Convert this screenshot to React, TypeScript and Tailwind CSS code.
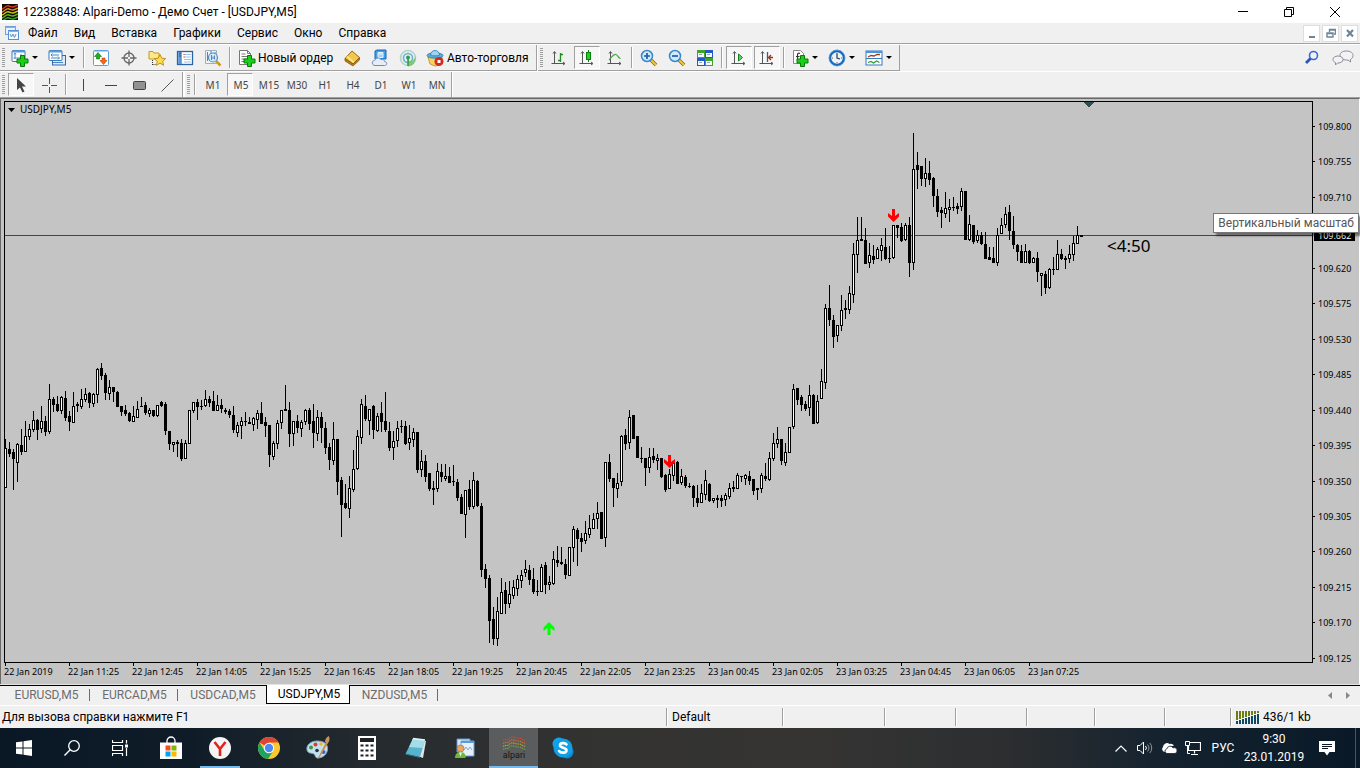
import type { ReactNode } from 'react'
import { clsx } from 'clsx'

// [high, body top, body bottom, low, rising] in chart rows, one candle every 4px
type Candle = [number, number, number, number, number]

const CANDLES: Candle[] = [
  [439, 448, 488, 488, 1], [442, 449, 454, 457, 0], [449, 452, 459, 490, 0], [443, 444, 463, 482, 1], [429, 445, 452, 455, 0],
  [421, 436, 452, 452, 1], [424, 429, 437, 440, 1], [411, 420, 430, 432, 1], [419, 420, 430, 440, 0], [406, 421, 429, 433, 1],
  [416, 421, 432, 436, 0], [384, 399, 432, 434, 1], [397, 399, 405, 412, 0], [396, 404, 411, 412, 0], [396, 397, 411, 414, 1],
  [391, 398, 418, 421, 0], [411, 416, 422, 431, 0], [392, 406, 423, 423, 1], [402, 404, 406, 412, 0], [389, 399, 407, 409, 1],
  [388, 394, 400, 402, 1], [392, 393, 403, 408, 0], [393, 394, 404, 407, 1], [368, 369, 395, 403, 1], [363, 368, 376, 380, 0],
  [373, 375, 393, 400, 0], [380, 387, 394, 400, 1], [387, 387, 392, 402, 0], [391, 392, 407, 407, 0], [406, 406, 412, 416, 0],
  [405, 410, 414, 416, 0], [412, 413, 421, 422, 0], [406, 416, 422, 422, 1], [401, 409, 418, 418, 1], [397, 406, 407, 407, 0],
  [402, 405, 413, 415, 0], [408, 410, 414, 417, 1], [410, 410, 416, 417, 0], [405, 405, 416, 417, 1], [401, 402, 406, 407, 0],
  [402, 404, 431, 435, 0], [431, 431, 444, 450, 0], [442, 442, 445, 452, 1], [440, 442, 444, 457, 0], [439, 443, 459, 461, 0],
  [440, 443, 459, 459, 1], [410, 410, 444, 444, 1], [402, 402, 411, 413, 1], [399, 402, 407, 420, 0], [400, 406, 407, 410, 0],
  [390, 399, 406, 407, 1], [396, 399, 403, 407, 0], [391, 401, 411, 411, 0], [395, 405, 411, 411, 1], [399, 405, 409, 413, 0],
  [408, 410, 412, 414, 0], [409, 411, 415, 418, 0], [406, 415, 430, 433, 0], [422, 425, 433, 437, 1], [417, 421, 426, 439, 1],
  [412, 421, 422, 426, 0], [417, 422, 424, 424, 0], [417, 418, 425, 431, 1], [410, 413, 420, 429, 1], [402, 413, 424, 424, 0],
  [417, 422, 426, 437, 0], [425, 425, 455, 467, 0], [441, 443, 457, 460, 1], [420, 423, 444, 449, 1], [410, 410, 423, 429, 1],
  [385, 409, 411, 411, 0], [402, 410, 434, 447, 0], [421, 421, 434, 446, 1], [415, 421, 428, 433, 0], [420, 422, 429, 437, 1],
  [409, 410, 422, 425, 1], [408, 410, 424, 430, 0], [404, 421, 433, 448, 0], [410, 417, 434, 441, 1], [412, 417, 428, 443, 0],
  [422, 428, 448, 454, 0], [443, 447, 460, 470, 0], [422, 439, 461, 465, 1], [439, 439, 482, 495, 0], [477, 480, 505, 537, 0],
  [484, 503, 508, 509, 0], [476, 488, 509, 518, 1], [450, 469, 490, 492, 1], [430, 436, 469, 470, 1], [399, 404, 438, 444, 1],
  [395, 406, 419, 421, 0], [409, 409, 421, 435, 1], [405, 406, 430, 439, 0], [413, 416, 431, 432, 1], [402, 413, 422, 432, 0],
  [392, 421, 430, 432, 0], [422, 431, 448, 451, 0], [431, 441, 448, 460, 1], [421, 428, 441, 447, 1], [420, 426, 427, 433, 0],
  [421, 426, 444, 445, 0], [425, 438, 443, 450, 1], [428, 432, 440, 447, 1], [432, 432, 470, 473, 0], [450, 461, 470, 477, 1],
  [455, 461, 477, 482, 0], [473, 473, 489, 491, 0], [481, 488, 490, 505, 0], [463, 471, 489, 492, 1], [464, 472, 477, 482, 0],
  [464, 476, 479, 481, 1], [467, 476, 483, 483, 0], [465, 481, 482, 486, 0], [479, 482, 498, 501, 0], [494, 497, 514, 514, 0],
  [490, 490, 515, 538, 1], [480, 489, 507, 510, 0], [472, 480, 507, 509, 1], [480, 481, 506, 507, 0], [503, 506, 570, 577, 0],
  [564, 569, 579, 588, 0], [575, 578, 621, 643, 0], [607, 619, 639, 645, 0], [597, 611, 639, 646, 1], [578, 592, 614, 614, 1],
  [582, 590, 604, 614, 0], [581, 594, 604, 608, 1], [580, 587, 596, 599, 1], [575, 579, 589, 596, 1], [570, 575, 581, 588, 1],
  [560, 569, 573, 577, 1], [565, 570, 580, 585, 0], [568, 579, 592, 594, 0], [580, 591, 592, 596, 0], [564, 567, 592, 592, 1],
  [562, 565, 585, 594, 0], [576, 582, 585, 590, 1], [551, 559, 584, 585, 1], [546, 560, 563, 567, 0], [547, 562, 564, 565, 0],
  [559, 564, 575, 579, 0], [547, 547, 576, 576, 1], [526, 529, 548, 562, 1], [528, 530, 539, 566, 0], [533, 538, 542, 552, 0],
  [521, 533, 541, 544, 1], [515, 528, 535, 538, 1], [513, 519, 529, 529, 1], [502, 513, 519, 529, 1], [512, 512, 539, 539, 0],
  [462, 462, 538, 547, 1], [454, 462, 479, 482, 0], [478, 478, 488, 507, 0], [473, 483, 489, 498, 1], [435, 436, 482, 486, 1],
  [429, 435, 444, 450, 0], [410, 417, 443, 449, 1], [415, 415, 439, 439, 0], [436, 436, 458, 458, 0], [447, 458, 459, 463, 0],
  [458, 458, 468, 486, 0], [448, 457, 468, 473, 1], [448, 456, 460, 463, 0], [454, 458, 461, 470, 1], [458, 458, 477, 478, 0],
  [474, 475, 490, 492, 0], [469, 474, 489, 489, 1], [462, 463, 476, 481, 1], [461, 462, 484, 484, 0], [469, 476, 483, 485, 1],
  [475, 477, 486, 488, 0], [483, 486, 487, 488, 0], [485, 486, 498, 507, 0], [485, 498, 503, 507, 0], [484, 493, 503, 503, 1],
  [470, 480, 495, 500, 1], [483, 484, 501, 502, 0], [498, 498, 501, 503, 1], [495, 498, 500, 508, 0], [495, 498, 501, 507, 0],
  [493, 495, 500, 506, 1], [483, 488, 497, 499, 1], [481, 487, 489, 492, 0], [473, 475, 489, 489, 1], [476, 476, 477, 482, 0],
  [474, 475, 479, 485, 1], [471, 476, 481, 485, 0], [479, 479, 491, 495, 0], [488, 488, 490, 500, 0], [473, 475, 489, 493, 1],
  [463, 476, 479, 481, 0], [452, 458, 480, 481, 1], [433, 443, 459, 461, 1], [427, 439, 444, 448, 1], [439, 439, 461, 465, 0],
  [443, 452, 463, 466, 1], [427, 427, 453, 453, 1], [384, 389, 427, 429, 1], [388, 388, 400, 405, 0], [395, 397, 405, 411, 0],
  [401, 404, 409, 411, 0], [385, 395, 408, 416, 1], [394, 395, 424, 424, 0], [395, 401, 423, 424, 1], [369, 381, 399, 399, 1],
  [304, 308, 383, 389, 1], [285, 308, 320, 326, 0], [315, 320, 337, 348, 0], [325, 325, 336, 342, 1], [295, 310, 326, 331, 1],
  [300, 308, 310, 319, 0], [286, 293, 310, 314, 1], [243, 254, 295, 303, 1], [217, 240, 255, 273, 1], [217, 239, 241, 241, 0],
  [228, 240, 264, 264, 0], [243, 255, 263, 268, 1], [245, 256, 260, 264, 0], [247, 249, 259, 259, 1], [238, 245, 251, 261, 1],
  [228, 247, 259, 260, 0], [246, 258, 259, 263, 0], [225, 225, 258, 259, 1], [225, 225, 228, 238, 0], [223, 227, 241, 242, 0],
  [223, 225, 240, 241, 1], [217, 225, 263, 277, 0], [133, 169, 263, 270, 1], [152, 165, 170, 189, 0], [166, 166, 179, 186, 0],
  [158, 173, 179, 187, 1], [161, 173, 180, 185, 0], [177, 178, 196, 207, 0], [189, 196, 212, 217, 0], [207, 210, 213, 228, 0],
  [192, 208, 214, 218, 1], [199, 207, 210, 222, 1], [197, 207, 208, 211, 0], [203, 206, 209, 214, 0], [188, 191, 207, 211, 1],
  [191, 191, 240, 240, 0], [215, 224, 240, 241, 1], [225, 225, 242, 244, 0], [230, 235, 241, 243, 1], [232, 235, 244, 245, 0],
  [232, 244, 259, 259, 0], [247, 257, 260, 260, 0], [247, 258, 263, 263, 0], [228, 235, 263, 266, 1], [218, 225, 234, 234, 1],
  [207, 214, 225, 228, 1], [205, 212, 231, 240, 0], [216, 231, 245, 249, 0], [244, 245, 252, 261, 0], [245, 251, 263, 263, 0],
  [244, 251, 263, 263, 1], [250, 251, 263, 264, 0], [257, 258, 263, 263, 1], [252, 258, 272, 282, 0], [273, 273, 276, 296, 1],
  [271, 274, 288, 294, 0], [268, 269, 288, 289, 1], [257, 269, 270, 275, 0], [240, 254, 270, 270, 1], [249, 254, 259, 260, 0],
  [256, 258, 260, 269, 0], [245, 254, 259, 263, 1], [236, 243, 255, 261, 1], [226, 235, 244, 244, 1], [235, 235, 237, 237, 0],
]

const PRICES = [
  '109.800', '109.755', '109.710', '109.665', '109.620', '109.575', '109.530', '109.485',
  '109.440', '109.395', '109.350', '109.305', '109.260', '109.215', '109.170', '109.125',
]

const TIMES = [
  '22 Jan 2019', '22 Jan 11:25', '22 Jan 12:45', '22 Jan 14:05', '22 Jan 15:25', '22 Jan 16:45',
  '22 Jan 18:05', '22 Jan 19:25', '22 Jan 20:45', '22 Jan 22:05', '22 Jan 23:25', '23 Jan 00:45',
  '23 Jan 02:05', '23 Jan 03:25', '23 Jan 04:45', '23 Jan 06:05', '23 Jan 07:25',
]

const MENU = ['Файл', 'Вид', 'Вставка', 'Графики', 'Сервис', 'Окно', 'Справка']
const PERIODS = ['M1', 'M5', 'M15', 'M30', 'H1', 'H4', 'D1', 'W1', 'MN']
const TABS = ['EURUSD,M5', 'EURCAD,M5', 'USDCAD,M5', 'USDJPY,M5', 'NZDUSD,M5']

function Icon({ children, size = 18 }: { children: ReactNode; size?: number }) {
  return (
    <svg width={size} height={size} viewBox={`0 0 ${size} ${size}`} className="shrink-0" fill="none">
      {children}
    </svg>
  )
}

/* ---------- toolbar pieces ---------- */

function Grip() {
  return (
    <span className="flex w-[7px] shrink-0 items-center pl-0.5">
      <span className="h-[19px] w-[3px] bg-[repeating-linear-gradient(to_bottom,#a0a0a0_0_1px,transparent_1px_2px)]" />
    </span>
  )
}

function Sep() {
  return <span className="mx-0.5 my-0.5 w-0.5 shrink-0 border-l border-[#a0a0a0] bg-white" />
}

function Tool({ label, pressed, children }: { label: string; pressed?: boolean; children: ReactNode }) {
  return (
    <button
      aria-label={label}
      aria-pressed={pressed}
      className={clsx(
        'flex w-[26px] shrink-0 items-center justify-center mx-px my-px border',
        pressed ? 'border-t-[#a0a0a0] border-l-[#a0a0a0] border-r-white border-b-white bg-[#f7f7f7]' : 'border-transparent',
      )}
    >
      {children}
    </button>
  )
}

function SplitTool({ label, children }: { label: string; children: ReactNode }) {
  return (
    <button aria-label={label} className="flex w-[37px] shrink-0 items-center gap-0.5 pl-1">
      {children}
      <svg width="6" height="3" viewBox="0 0 6 3" className="ml-px">
        <path d="M0 0h6L3 3z" fill="#000" />
      </svg>
    </button>
  )
}

function Bar({ children, last }: { children: ReactNode; last?: boolean }) {
  return (
    <div className={clsx('flex shrink-0 border-r border-[#a0a0a0] pr-px', last ? 'h-[25px]' : 'h-[26px] border-b')}>
      {children}
    </div>
  )
}

function Plus({ x, y }: { x: number; y: number }) {
  return (
    <path
      d={`M${x + 3.5} ${y + 0.5}h4v3.5h3.5v4h-3.5v3.5h-4v-3.5h-3.5v-4h3.5z`}
      fill="#18d018"
      stroke="#087a08"
    />
  )
}

function Axes() {
  return (
    <path d="M4.500 3v12M1.500 14.500h13M3 4.500l1.500-2 1.500 2M13 13l2 1.500-2 1.500" stroke="#555" />
  )
}

function Magnifier({ plus }: { plus: boolean }) {
  return (
    <Icon>
      <path d="M11 11l5 5" stroke="#8a6a10" strokeWidth="3.600" />
      <path d="M11 11l5 5" stroke="#f0c840" strokeWidth="2" />
      <circle cx="7" cy="7" r="5.500" fill="#cfeafa" stroke="#3a86c8" strokeWidth="1.500" />
      <path d={plus ? 'M4 7h6M7 4v6' : 'M4 7h6'} stroke="#1c5fa8" strokeWidth="1.700" />
    </Icon>
  )
}

function ChartToolbar() {
  return (
    <div className="flex">
      <Bar>
        <Grip />
        <SplitTool label="Новый график">
          <Icon>
            <rect x="1" y="1.500" width="13" height="11" rx="1" fill="#fff" stroke="#3d7ab8" />
            <path d="M1 2.500h13" stroke="#5b9bd8" strokeWidth="2" />
            <path d="M4 4v6M2.500 9h8M3 5.500L4 4l1 1.500M10 5v3" stroke="#5c8cba" />
            <Plus x={6} y={6} />
          </Icon>
        </SplitTool>
        <SplitTool label="Профили">
          <Icon>
            <rect x="4.500" y="6.500" width="13" height="9.500" fill="#dcebfa" stroke="#2e6cb0" />
            <rect x="1" y="1.500" width="13" height="10" rx="1" fill="#fff" stroke="#3d7ab8" />
            <path d="M1 2.500h13" stroke="#5b9bd8" strokeWidth="2" />
            <path d="M3 6h8M3 9h8M4.500 4.500L3 6l1.500 1.500M10 7.500L11.500 9 10 10.500M5 13.500h10" stroke="#4a86c0" />
          </Icon>
        </SplitTool>
        <Sep />
        <Tool label="Обзор рынка">
          <Icon>
            <rect x="1.500" y="1.500" width="15" height="15" rx="1" fill="#fff" stroke="#5ba0dc" />
            <path d="M2 2.500h14" stroke="#aed4f4" />
            <path d="M2.500 7.500l3.500-4 3.500 4h-2V10h-3V7.500z" fill="#1fae22" stroke="#0e7410" strokeWidth=".6" />
            <path d="M8 11.500l3.500 4 3.500-4h-2V9h-3v2.500z" fill="#f46a1a" stroke="#b93c06" strokeWidth=".6" />
          </Icon>
        </Tool>
        <Tool label="Окно данных">
          <Icon>
            <circle cx="9" cy="9" r="5" stroke="#666" strokeWidth="1.300" />
            <path d="M9 1.500V8M9 10v6.500M1.500 9H8M10 9h6.500" stroke="#666" strokeWidth="1.300" />
          </Icon>
        </Tool>
        <Tool label="Навигатор">
          <Icon>
            <path d="M1 2.500h4l1 1.500h5v6H1z" fill="#fbe78c" stroke="#c49a20" />
            <path d="M4.500 11v5M4.500 15.500h4" stroke="#333" strokeDasharray="1 1" />
            <path d="M12 5.500l1.700 3.700 4 .4-3 2.700.9 4-3.600-2.100-3.600 2.100.9-4-3-2.700 4-.4z" fill="#ffdc50" stroke="#b98a10" strokeWidth=".9" />
          </Icon>
        </Tool>
        <Tool label="Терминал">
          <Icon>
            <rect x="1.500" y="2.500" width="15" height="13" fill="#fff" stroke="#2a64a8" strokeWidth="1.300" />
            <path d="M4 3v12" stroke="#5b94d0" strokeWidth="3.600" />
            <path d="M8 5.500h7M8 8h7M8 10.500h7M8 13h7" stroke="#9cc4ea" />
            <path d="M7.500 5.500h1M7.500 8h1" stroke="#e03020" />
            <path d="M3.500 4.500h1M3.500 7h1" stroke="#143a70" strokeWidth="1.500" />
          </Icon>
        </Tool>
        <Tool label="Тестер стратегий">
          <Icon>
            <path d="M1.500 1.500h11v13h-11z" fill="#eef4f8" stroke="#a4aeb8" />
            <path d="M3.500 3v9M7 2v3M11 3v2" stroke="#4a88b8" />
            <path d="M12 12l4.500 4.500" stroke="#d09a20" strokeWidth="2.500" />
            <circle cx="9" cy="8.500" r="4.500" fill="#d4ebf8" fillOpacity=".9" stroke="#5590bc" strokeWidth="1.200" />
            <path d="M7.500 6v5M10.500 6.500v4M9 7.500v2.500" stroke="#4a88b8" />
          </Icon>
        </Tool>
        <Sep />
        <button className="flex w-[105px] items-center gap-0.5 pl-[5px] text-[12px] whitespace-nowrap">
          <Icon>
            <path d="M1.500 1.500h8l3 3v11h-11z" fill="#fff" stroke="#777" />
            <path d="M9.500 1.500v3h3M3.500 5h4M3.500 7.500h7M3.500 10h5M3.500 12.500h3" stroke="#777" />
            <Plus x={6} y={6} />
          </Icon>
          <span>Новый ордер</span>
        </button>
        <Tool label="MetaEditor">
          <Icon>
            <path d="M2 9.500L9 2l7.500 6.500-6.500 6.500z" fill="#f2c84a" stroke="#9c6a10" />
            <path d="M4 7.500l7 6" stroke="#fbeaa0" strokeWidth="1.500" />
            <path d="M2 9.500l8 5.500 6.500-6.500v2.500L10 17l-8-5z" fill="#b9801c" stroke="#7c5008" strokeWidth=".7" />
          </Icon>
        </Tool>
        <Tool label="VPS">
          <Icon>
            <path d="M4 2l2-1h9v9H4z" fill="#3f9ee8" stroke="#1b6ab4" />
            <path d="M7 3.500h5v5H7zM8 5h3" fill="#9cd2fa" stroke="#eaf6ff" />
            <path d="M4 16.500c-3.500 0-3.500-5-.3-5.200 1-3 5.300-3 6.300-.6 2-.9 3.500.6 3.500 1.800 3 .2 3 4 0 4z" fill="#e6edf8" stroke="#6f8cb8" />
          </Icon>
        </Tool>
        <Tool label="Сигналы">
          <Icon>
            <circle cx="9" cy="9" r="7.500" stroke="#b4d2cc" strokeWidth="1.600" fill="#e3f1f2" />
            <circle cx="9" cy="9" r="4.500" stroke="#70b0c8" strokeWidth="1.600" />
            <path d="M9 9v8.500a8 8 0 007-5 8 8 0 00.5-5c-1.500 4-4 5-5.500 5z" fill="#6cc25c" fillOpacity=".8" />
            <circle cx="9" cy="8.500" r="2" fill="#2f9a60" />
            <path d="M9 9v8" stroke="#2f9a40" strokeWidth="1.500" />
          </Icon>
        </Tool>
        <button className="flex w-[113px] items-center gap-[3px] pl-1 text-[12px] whitespace-nowrap">
          <Icon>
            <path d="M2 8h14l-2 8-5 1-5-2z" fill="#f6d260" stroke="#b78a18" strokeWidth=".8" />
            <ellipse cx="9" cy="6.500" rx="8" ry="2.700" fill="#58aee0" stroke="#2d78a8" strokeWidth=".8" />
            <path d="M4.500 6a4.500 4.500 0 019 0c-2 1.200-7 1.200-9 0z" fill="#9bd6f6" stroke="#2d78a8" strokeWidth=".8" />
            <circle cx="13" cy="12.500" r="4.500" fill="#d82a18" />
            <rect x="11.500" y="11" width="3" height="3" fill="#fff" />
          </Icon>
          <span>Авто-торговля</span>
        </button>
      </Bar>
      <div className="w-px bg-white" />
      <Bar>
        <Grip />
        <Tool label="Бары">
          <Icon>
            <Axes />
            <path d="M10.500 4v9M8 11.500h2.500M10.500 5.500H13" stroke="#1c8c20" strokeWidth="1.300" />
          </Icon>
        </Tool>
        <Tool label="Свечи" pressed>
          <Icon>
            <Axes />
            <path d="M10.500 1v12" stroke="#0b7d0e" />
            <rect x="8.500" y="3.500" width="4" height="7" fill="#22d022" stroke="#0b7d0e" />
          </Icon>
        </Tool>
        <Tool label="Линия">
          <Icon>
            <Axes />
            <path d="M3 11c3-3 4-6 7-5.500 2 .5 2 3.500 4.500 4" stroke="#46a648" strokeWidth="1.200" />
          </Icon>
        </Tool>
        <Sep />
        <Tool label="Увеличить">
          <Magnifier plus />
        </Tool>
        <Tool label="Уменьшить">
          <Magnifier plus={false} />
        </Tool>
        <Tool label="Окна рядом">
          <Icon>
            <rect x="1" y="1" width="8" height="8" fill="#3fa52a" />
            <rect x="9" y="1" width="8" height="8" fill="#2458c8" />
            <rect x="1" y="9" width="8" height="8" fill="#2458c8" />
            <rect x="9" y="9" width="8" height="8" fill="#3fa52a" />
            <path d="M2 4h6v4H2zM10 4h6v4h-6zM2 12h6v4H2zM10 12h6v4h-6z" fill="#f4f8ff" />
            <path d="M3 5.500h3M11 5.500h3M3 13.500h3M11 13.500h3" stroke="#8ab" />
          </Icon>
        </Tool>
        <Sep />
        <Tool label="Автопрокрутка" pressed>
          <Icon>
            <Axes />
            <path d="M8.500 5l4 3.500-4 3.500z" fill="#5fd85f" stroke="#12801a" />
          </Icon>
        </Tool>
        <Tool label="Сдвиг графика" pressed>
          <Icon>
            <Axes />
            <path d="M9.500 3v10" stroke="#1f66a4" strokeWidth="1.300" />
            <path d="M15 8.500h-4M13 6l-2.500 2.500L13 11" stroke="#a83210" strokeWidth="1.300" />
          </Icon>
        </Tool>
        <Sep />
        <SplitTool label="Индикаторы">
          <Icon>
            <path d="M2.500 1.500h7l3 3v10h-10z" fill="#fff" stroke="#888" />
            <path d="M9 4.500c-2-1-2.500 0-2.500 2V12M5 7.500h3.500" stroke="#333" strokeWidth="1.200" />
            <Plus x={6} y={6} />
          </Icon>
        </SplitTool>
        <SplitTool label="Периоды">
          <Icon>
            <circle cx="9" cy="9" r="7" fill="#eaf4fc" stroke="#1d66b8" strokeWidth="2.400" />
            <circle cx="9" cy="9" r="8" stroke="#63a8e4" strokeWidth=".7" />
            <path d="M9 4.500V9l3 1" stroke="#333" strokeWidth="1.200" />
            <path d="M9 4v1M9 13v1M4 9h1M13 9h1" stroke="#567" />
          </Icon>
        </SplitTool>
        <SplitTool label="Шаблоны">
          <Icon>
            <rect x="1" y="2" width="16" height="14" fill="#fff" stroke="#2f78c0" />
            <path d="M1 3h16" stroke="#4a94dc" strokeWidth="2" />
            <path d="M1 9.500h16" stroke="#2f78c0" />
            <path d="M3 8l3-1.500 3 .5 3-1.500h3" stroke="#a83a10" strokeWidth="1.300" />
            <path d="M3 13.500l3-1 2.500 1.500 3-2 3 1.500" stroke="#309a38" strokeWidth="1.300" />
          </Icon>
        </SplitTool>
      </Bar>
      <div className="ml-auto flex items-center gap-3 pr-1.5">
        <button aria-label="Поиск">
          <Icon size={16}>
            <circle cx="9.500" cy="5.500" r="4" stroke="#3a68d8" strokeWidth="1.600" />
            <path d="M6.500 8.500L2 13" stroke="#2a54c4" strokeWidth="2.800" />
          </Icon>
        </button>
        <button aria-label="Чат">
          <svg width="22" height="16" viewBox="0 0 22 16" fill="#f3f3f7" stroke="#8e8e94">
            <path d="M14.500 1c4 0 6.500 1.800 6.500 4.500 0 2-1 3-2.500 3.800v2.700L16 10h-1.500C10.500 10 8 8.300 8 5.500S10.500 1 14.500 1z" />
            <path d="M6 6c3 0 5 1.500 5 3.500S9 13 6 13h-.5L3.500 15v-2.500C2 12 1 11 1 9.500 1 7.500 3 6 6 6z" />
          </svg>
        </button>
      </div>
    </div>
  )
}

function LineToolbar() {
  return (
    <div className="flex border-t border-white">
      <Bar last>
        <Grip />
        <Tool label="Курсор" pressed>
          <Icon>
            <path d="M5 2v12l3-2.500 2.500 5 2-1-2.500-5h4z" fill="#444" />
          </Icon>
        </Tool>
        <Tool label="Перекрестие">
          <Icon>
            <path d="M9.500 2v6M9.500 11v6M2 9.500h6M11 9.500h6" stroke="#555" />
          </Icon>
        </Tool>
        <Sep />
        <Tool label="Вертикальная линия">
          <Icon>
            <path d="M9.500 3v12" stroke="#444" />
          </Icon>
        </Tool>
        <Tool label="Горизонтальная линия">
          <Icon>
            <path d="M3 9.500h12" stroke="#444" />
          </Icon>
        </Tool>
        <Tool label="Прямоугольник">
          <Icon>
            <rect x="3.500" y="5.500" width="12" height="8" rx="1" fill="#929292" stroke="#444" />
          </Icon>
        </Tool>
        <Tool label="Трендовая линия">
          <Icon>
            <path d="M3.500 15.500l12-12" stroke="#555" />
          </Icon>
        </Tool>
      </Bar>
      <div className="w-0.5 bg-white" />
      <Bar last>
        <Grip />
        <Sep />
        {PERIODS.map((p) => (
          <Tool key={p} label={p} pressed={p === 'M5'}>
            <span className="pt-0.5 pl-0.5 font-['Noto_Sans',sans-serif] text-[10px] text-[#444]">{p}</span>
          </Tool>
        ))}
      </Bar>
      <div className="w-px bg-white" />
    </div>
  )
}

/* ---------- window frame ---------- */

function TitleBar() {
  return (
    <header className="flex h-[23px] shrink-0 items-center bg-white pr-0.5">
      <svg width="16" height="16" viewBox="0 0 16 16" className="ml-0.5" fill="none" strokeWidth="1.500">
        <rect width="16" height="16" fill="#120c04" />
        <path d="M0 5c3-1 4-4 7-3s4 2 9-1" stroke="#d83a1c" />
        <path d="M0 8c3-1 4-4 7-3s4 2 9-1" stroke="#e08a1c" />
        <path d="M0 11c3-1 4-4 7-3s4 2 9-1" stroke="#c8c81c" />
        <path d="M0 14c3-1 4-4 7-3s4 2 9-1" stroke="#5cb81c" />
        <path d="M0 17c3-1 4-4 7-3s4 2 9-1" stroke="#2ea42c" />
      </svg>
      <h1 className="ml-[5px] text-[12px]">12238848: Alpari-Demo - Демо Счет - [USDJPY,M5]</h1>
      <div className="ml-auto flex self-stretch">
        <button aria-label="Свернуть" className="flex w-[46px] items-center justify-center">
          <svg width="10" height="10" viewBox="0 0 10 10" stroke="#000"><path d="M0 4.500h10" /></svg>
        </button>
        <button aria-label="Восстановить" className="flex w-[46px] items-center justify-center">
          <svg width="10" height="10" viewBox="0 0 10 10" stroke="#000" fill="none">
            <path d="M.5 2.500h7v7h-7zM2.500 2.500v-2h7v7h-2" />
          </svg>
        </button>
        <button aria-label="Закрыть" className="flex w-[46px] items-center justify-center">
          <svg width="10" height="10" viewBox="0 0 10 10" stroke="#000"><path d="M0 0l10 10M10 0L0 10" /></svg>
        </button>
      </div>
    </header>
  )
}

function MenuBar() {
  return (
    <nav className="flex h-[21px] shrink-0 items-center border-b border-[#a0a0a0]">
      <span className="ml-1">
        <Icon size={16}>
          <rect x="1.500" y="1.500" width="10" height="8" fill="#eaf3fd" stroke="#6aa0dc" />
          <path d="M1 2.500h11" stroke="#7fb2ea" />
          <rect x="4.500" y="5.500" width="10" height="9" fill="#f6faff" stroke="#5590d4" />
          <path d="M4 6.500h11" stroke="#7fb2ea" />
          <path d="M6 9l1.500 3L9 9l1.500 3.500L12 9" stroke="#5b90c8" />
        </Icon>
      </span>
      {MENU.map((m) => (
        <button key={m} className="px-2 text-[12px]">{m}</button>
      ))}
      <div className="ml-auto flex gap-0.5 pr-0.5 text-[#6f8494]">
        {[
          { label: 'Свернуть окно', d: 'M2 9h6', w: 2 },
          { label: 'Восстановить окно', d: 'M1 5h6v4H1zM3.500 4V1.500h6V6H8M1 5.500h6M3.500 2h6', w: 1.4 },
          { label: 'Закрыть окно', d: 'M2 2l6 6.500M8 2L2 8.500', w: 2.2 },
        ].map((b) => (
          <button key={b.label} aria-label={b.label} className="flex size-[17px] items-center justify-center border border-[#dedede] bg-white">
            <svg width="10" height="10" viewBox="0 0 10 10" fill="none" stroke="currentColor" strokeWidth={b.w}>
              <path d={b.d} />
            </svg>
          </button>
        ))}
      </div>
    </nav>
  )
}

/* ---------- chart ---------- */

function Signal({ x, y, up }: { x: number; y: number; up?: boolean }) {
  return (
    <path
      transform={`translate(${x} ${y}) ${up ? 'scale(1 -1)' : ''}`}
      d="M-1.500-6.500h3v7L5.500-2.500V1L0 6.500-5.500 1v-3.500l4 3z"
      fill={up ? '#00ff00' : '#ff0000'}
    />
  )
}

function Plot() {
  return (
    <svg width="100%" height="100%" className="block h-full w-full" shapeRendering="crispEdges">
      {/* rows and columns are counted from the window corner */}
      <g transform="translate(-5 -102)">
        <rect x="5" y="235" width="100%" height="1" fill="#2f4f4f" />
        {CANDLES.map(([high, top, bottom, low, rising], i) => {
          const x = 5 + i * 4
          return (
            <g key={i}>
              <rect x={x} y={high} width="1" height={Math.max(low - high, 1)} />
              <rect x={x - 1} y={top} width="3" height={Math.max(bottom - top, 1)} />
              {rising === 1 && <rect x={x} y={top + 1} width="1" height={bottom - top - 2} fill="#fff" />}
            </g>
          )
        })}
        <path d="M1083 102h11l-5 5h-1z" fill="#2f4f4f" />
        <g shapeRendering="auto">
          <Signal x={893.5} y={215.5} />
          <Signal x={669.5} y={461.5} />
          <Signal x={549} y={628.5} up />
          <path d="M8 108h7l-3.500 4z" />
        </g>
        <text x="20" y="113" fontSize="10">USDJPY,M5</text>
        <text x="1107" y="252" fontSize="17">&lt;4:50</text>
      </g>
    </svg>
  )
}

function ChartPanel() {
  return (
    <main className="relative flex min-h-0 flex-1 border-t border-r border-l border-[#696969] border-r-white bg-[#c4c4c4] pt-0.5 pl-[3px] font-['Noto_Sans',sans-serif]">
      <div className="flex min-w-0 flex-1 flex-col">
        <div className="min-h-0 flex-1 overflow-hidden border border-black">
          <Plot />
        </div>
        <div className="flex h-[21px] overflow-hidden">
          {TIMES.map((t) => (
            <div key={t} className="w-16 shrink-0 text-[9px] leading-[12px] whitespace-nowrap">
              <div className="ml-px h-[3px] w-px bg-black" />
              {t}
            </div>
          ))}
        </div>
      </div>
      <svg width="46" className="h-full shrink-0" fontSize="9">
        {PRICES.map((p, i) => {
          const y = Math.round(25 + i * 35.45)
          return (
            <g key={p}>
              <rect y={y} width="2" height="1" />
              <text x="5" y={y + 4}>{p}</text>
            </g>
          )
        })}
        <rect x="1" y="127" width="41" height="13" />
        <text x="5" y="138" fill="#fff">109.662</text>
      </svg>
      <div role="tooltip" className="absolute top-[114px] right-0 flex h-5 items-center border border-[#767676] bg-white px-1 font-['Roboto','Noto_Sans',sans-serif] text-[12px] whitespace-nowrap text-[#575757] shadow-[3px_3px_2px_rgba(0,0,0,0.45)]">
        Вертикальный масштаб
      </div>
    </main>
  )
}

function TabStrip() {
  return (
    <div className="flex h-[22px] shrink-0 items-start border-t border-b border-t-[#e3e3e3] border-b-white text-[12px]">
      <div className="h-px w-0.5 bg-black" />
      {TABS.map((t, i) => {
        const active = t === 'USDJPY,M5'
        return (
          <button
            key={t}
            className={clsx(
              'flex h-[19px] items-center whitespace-nowrap',
              active
                ? 'w-[84px] justify-center border-r border-b border-l border-black bg-white text-black'
                : 'w-[88px] justify-center border-t border-black text-[#6d6d6d]',
            )}
          >
            <span className="flex-1 pl-0.5">{t}</span>
            {!active && i !== 2 && <span className="h-3 w-px bg-[#6d6d6d]" />}
          </button>
        )
      })}
      <div className="flex flex-1 justify-end gap-3.5 self-stretch border-t border-black pr-2.5">
        <button aria-label="Назад">
          <svg width="4" height="7" viewBox="0 0 4 7"><path d="M4 0v7L0 3.500z" fill="#888" /></svg>
        </button>
        <button aria-label="Вперед">
          <svg width="4" height="7" viewBox="0 0 4 7"><path d="M0 0v7l4-3.500z" fill="#888" /></svg>
        </button>
      </div>
    </div>
  )
}

function StatusBar() {
  const cell = 'flex h-[18px] shrink-0 items-center border-l border-[#a0a0a0] shadow-[inset_1px_0_0_#fff]'
  return (
    <footer className="flex h-[22px] shrink-0 items-center text-[12px]">
      <span className="flex-1 pl-0.5">Для вызова справки нажмите F1</span>
      <span className={clsx(cell, 'w-[116px] pl-[5px]')}>Default</span>
      <span className={clsx(cell, 'w-[102px]')} />
      <span className={clsx(cell, 'w-[71px]')} />
      <span className={clsx(cell, 'w-[71px]')} />
      <span className={clsx(cell, 'w-[68px]')} />
      <span className={clsx(cell, 'w-[70px]')} />
      <span className={clsx(cell, 'w-[66px]')} />
      <span className={clsx(cell, 'w-[130px] gap-1 pl-[5px]')}>
        <svg width="23" height="13" viewBox="0 0 23 13" shapeRendering="crispEdges">
          {[0, 1, 2, 3, 4, 5, 6, 7].map((n) => (
            <g key={n}>
              <rect x={n * 3} width="2" height={9 - n} fill="#6b7f10" />
              <rect x={n * 3} y={10 - n} width="2" height={3 + n} fill="#0f4768" />
            </g>
          ))}
        </svg>
        436/1 kb
      </span>
    </footer>
  )
}

/* ---------- taskbar ---------- */

function TaskButton({ label, running, active, narrow, children }: {
  label: string
  running?: boolean
  active?: boolean
  narrow?: boolean
  children: ReactNode
}) {
  return (
    <button
      aria-label={label}
      className={clsx(
        'flex h-10 shrink-0 flex-col items-center',
        narrow ? 'w-12' : 'w-[49px]',
        active && 'bg-[#5a5c5e]',
      )}
    >
      <span className="flex h-[38px] items-center pt-0.5">{children}</span>
      <span className={clsx('h-0.5', running && 'bg-[#76b9ed]', active ? 'w-full' : 'w-10')} />
    </button>
  )
}

function Taskbar() {
  return (
    <div className="flex h-10 shrink-0 items-center bg-[linear-gradient(to_right,#0a1826_0%,#0f1c28_14%,#262b2f_28%,#323231_42%,#353433_60%,#2c2e30_74%,#14222f_86%,#0a1927_100%)] text-white">
      <div className="flex pr-0.5">
        <TaskButton label="Пуск" narrow>
          <Icon size={16}>
            <path d="M0 2.300l6.500-.9v6.100H0zM7.500 1.200L16 0v7.500H7.500zM0 8.500h6.500v6.100L0 13.700zM7.500 8.500H16V16l-8.500-1.200z" fill="#fff" />
          </Icon>
        </TaskButton>
        <TaskButton label="Поиск" narrow>
          <Icon size={16}>
            <circle cx="10" cy="6" r="5.300" stroke="#fff" strokeWidth="1.300" />
            <path d="M6.200 9.800L.5 15.500" stroke="#fff" strokeWidth="1.400" />
          </Icon>
        </TaskButton>
        <TaskButton label="Представление задач" narrow>
          <Icon size={16}>
            <path d="M.5 0v2.500h10V0M.5 16v-2.500h10V16M.5 5.500h10v5H.5zM14.500 0v3.500M14.500 8v8" stroke="#fff" strokeWidth="1.200" />
            <rect x="13" y="4.500" width="3" height="3" fill="#fff" />
          </Icon>
        </TaskButton>
      </div>
      <TaskButton label="Store">
        <Icon size={24}>
          <path d="M8 7V5a4 4 0 018 0v2" stroke="#fff" strokeWidth="1.300" />
          <path d="M1 6.500h22V23H1z" fill="#fff" />
          <path d="M6.500 9.500h5v5h-5z" fill="#f25022" />
          <path d="M12.500 9.500h5v5h-5z" fill="#7fba00" />
          <path d="M6.500 15.500h5v5h-5z" fill="#00a4ef" />
          <path d="M12.500 15.500h5v5h-5z" fill="#ffb900" />
        </Icon>
      </TaskButton>
      <TaskButton label="Yandex" running>
        <Icon size={24}>
          <circle cx="12" cy="12" r="11" fill="#f4f4f4" />
          <path d="M6.500 6l5.500 7 5.500-7M12 13v7" stroke="#e2231a" strokeWidth="2.600" />
        </Icon>
      </TaskButton>
      <TaskButton label="Chrome">
        <Icon size={24}>
          <circle cx="12" cy="12" r="11" fill="#fbc92e" />
          <path d="M12 12L2.500 6.500A11 11 0 0121.500 6.500H12z" fill="#dc4437" />
          <path d="M2.500 6.500A11 11 0 0011 23l5.500-8.500L12 12 7.500 14.500z" fill="#1ea362" />
          <circle cx="12" cy="12" r="5.200" fill="#fff" />
          <circle cx="12" cy="12" r="4.200" fill="#4a8af4" />
        </Icon>
      </TaskButton>
      <TaskButton label="Paint">
        <Icon size={24}>
          <path d="M11 5c7 0 11 3 10.500 8.500-.5 5-5 8.500-10 8.500-2.500 0-2-3-3.500-4S2 18 1 14C0 9 5 5 11 5z" fill="#c3dff0" stroke="#7fa7c4" />
          <circle cx="5" cy="11.500" r="2" fill="#3f9a3c" />
          <circle cx="9.500" cy="8.500" r="2" fill="#d8402c" />
          <circle cx="15" cy="8" r="1.800" fill="#e8b82c" />
          <circle cx="17.500" cy="16" r="2" fill="#3668c8" />
          <circle cx="11" cy="14.500" r="1.800" fill="#26323a" />
          <path d="M20 6l-7.500 15-1 2 2-1.500L22 7z" fill="#d08a3c" />
          <path d="M19 6c0-3 1.500-5 4-6 1 3 .5 5.500-1.500 7.500z" fill="#c29468" />
        </Icon>
      </TaskButton>
      <TaskButton label="Калькулятор">
        <Icon size={24}>
          <path d="M3 0h18v24H3z" fill="#fff" />
          <path d="M5 2h14v4H5z" fill="#1c2228" />
          <path d="M5.500 9.500h3M10.500 9.500h3M15.500 9.500h3M5.500 14.500h3M10.500 14.500h3M15.500 14.500h3M5.500 19.500h3M10.500 19.500h3M15.500 19.500h3" stroke="#1c2228" strokeWidth="2" />
        </Icon>
      </TaskButton>
      <TaskButton label="Блокнот">
        <Icon size={24}>
          <path d="M8 3l14 2-3 17-5-2z" fill="#dfe6ea" />
          <path d="M9 2.500l12 1.500-5 17L1.500 18z" fill="#58b4cc" />
          <path d="M9 2.500l12 1.500-2.500 8L5 11z" fill="#a4dce8" />
          <path d="M9 2.500l12 1.500" stroke="#e9f4f6" strokeWidth="1.500" />
          <path d="M1.500 18L16 21.500" stroke="#2c7488" />
        </Icon>
      </TaskButton>
      <TaskButton label="Терминал">
        <Icon size={24}>
          <path d="M4 3h13v13H4z" fill="#d8e9f8" stroke="#5a94cc" />
          <path d="M8 5h13v15H8z" fill="#e6f1fc" stroke="#6aa2d6" />
          <path d="M8 6h13" stroke="#5a9ae0" strokeWidth="2" />
          <path d="M11 14l2-3 2 3 2-3 2 3" stroke="#88aacc" />
          <circle cx="7.500" cy="12.500" r="3.500" fill="#eaa668" stroke="#a8642c" strokeWidth=".6" />
          <path d="M2 22c0-4 2.500-6 5.500-6s5.500 2 5 6z" fill="#6fb83c" />
          <path d="M6 16.500l1.500 4 1.500-4z" fill="#f4f8f0" />
        </Icon>
      </TaskButton>
      <TaskButton label="Alpari" running active>
        <svg width="24" height="24" viewBox="0 0 24 24" fill="none" strokeWidth="1.100">
          <path d="M1 4.500c3-2 4 0 6-2s4-2 6-1 5 0 6 1 3 1 4 2" stroke="#d8442c" strokeDasharray="1.500 .7" />
          <path d="M1 7.500c3-2 4 0 6-2s4-2 6-1 5 0 6 1 3 1 4 2" stroke="#d8702c" strokeDasharray="1.500 .7" />
          <path d="M1 10.500c3-2 4 0 6-2s4-2 6-1 5 0 6 1 3 1 4 2" stroke="#b8a82c" strokeDasharray="1.500 .7" />
          <path d="M1 13.500c3-2 4 0 6-2s4-2 6-1 5 0 6 1 3 1 4 2" stroke="#6ca43c" strokeDasharray="1.500 .7" />
          <text x="12" y="22" textAnchor="middle" fontSize="9" fill="#161616">alpari</text>
        </svg>
      </TaskButton>
      <TaskButton label="Skype">
        <Icon size={24}>
          <circle cx="8" cy="8" r="6.500" fill="#12a5e8" />
          <circle cx="16" cy="16" r="6.500" fill="#0c8ad8" />
          <circle cx="12" cy="12" r="9.500" fill="#10a0e4" />
          <path d="M15.500 8.500c-1-1.700-6.500-2.300-6.500.8 0 3 6.500 1.700 6.500 4.900 0 3.200-6 3-7.500.8" stroke="#fff" strokeWidth="2.600" strokeLinecap="round" />
        </Icon>
      </TaskButton>

      <div className="ml-auto flex h-full items-center text-[12px]">
        <button aria-label="Скрытые значки" className="flex w-6 justify-center">
          <svg width="12" height="7" viewBox="0 0 12 7" fill="none" stroke="#fff" strokeWidth="1.200"><path d="M.5 6.500L6 1l5.500 5.500" /></svg>
        </button>
        <button aria-label="Громкость" className="flex w-6 justify-center">
          <Icon size={16}>
            <path d="M.5 5.500h2.500l3.500-3.500v12L3 10.500H.5z" stroke="#fff" />
            <path d="M8.500 6a3 3 0 010 4" stroke="#fff" />
            <path d="M10.500 4.500a5 5 0 010 7M12.800 3a7.500 7.500 0 010 10" stroke="#8a949c" />
          </Icon>
        </button>
        <button aria-label="OneDrive" className="flex w-6 justify-center">
          <Icon size={16}>
            <path d="M3.500 12A3 3 0 012 7a4 4 0 016.500-3A4 4 0 0113 5.500L8 7z" fill="#fff" />
            <path d="M6 13.500a2.300 2.300 0 01-.3-4.500A3.500 3.500 0 0112 7.700a2.900 2.900 0 012 5.800z" fill="#fff" stroke="#0f1e2c" strokeWidth=".8" />
          </Icon>
        </button>
        <button aria-label="Сеть" className="flex w-6 justify-center">
          <Icon size={16}>
            <path d="M5 2.500h10.500v8H3.500V6M9.500 10.500v3M6 14.500h7" stroke="#fff" strokeWidth="1.200" />
            <path d="M.5 1.500h4v4h-4zM2.500 5.500v8H5" stroke="#fff" />
          </Icon>
        </button>
        <button className="w-9 text-center">РУС</button>
        <button className="flex w-[66px] flex-col items-center leading-[18px]">
          <span>9:30</span>
          <span>23.01.2019</span>
        </button>
        <button aria-label="Уведомления" className="flex w-10 justify-center">
          <Icon size={16}>
            <path d="M0 1h16v11h-5.500L8 15.500 5.500 12H0z" fill="#fff" />
            <path d="M3 4.500h10M3 6.500h10M3 8.500h6" stroke="#0a1927" />
          </Icon>
        </button>
        <div className="mr-1 ml-2 h-full w-px bg-[#4a5560]" />
      </div>
    </div>
  )
}

export default function App() {
  return (
    <div className="flex h-screen flex-col overflow-hidden bg-[#f0f0f0] font-['Roboto','Noto_Sans',sans-serif] text-black">
      <TitleBar />
      <MenuBar />
      <div className="shrink-0 border-t border-b border-t-white border-b-[#a0a0a0]">
        <ChartToolbar />
        <LineToolbar />
      </div>
      <ChartPanel />
      <TabStrip />
      <StatusBar />
      <Taskbar />
    </div>
  )
}
